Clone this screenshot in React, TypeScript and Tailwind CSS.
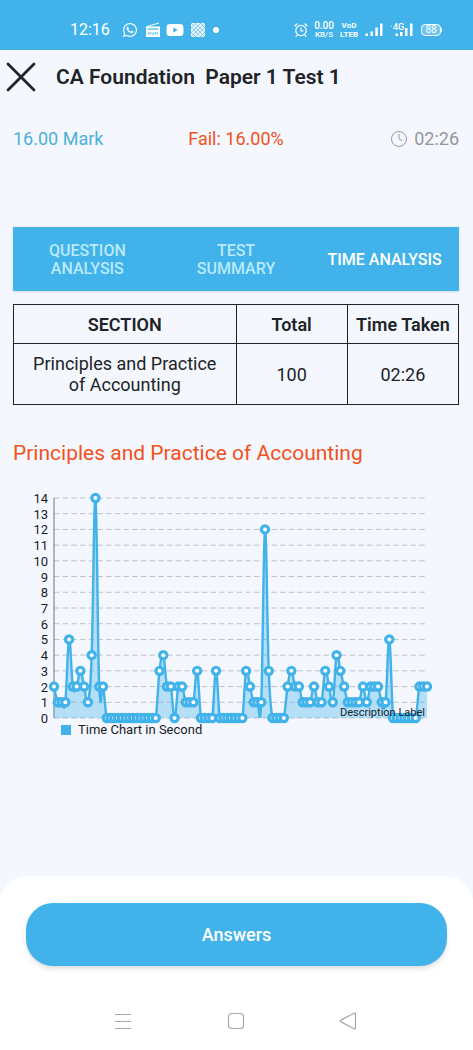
import { Clock } from "lucide-react";
import { FaWhatsapp, FaYoutube } from "react-icons/fa";

const tabs = ["QUESTION ANALYSIS", "TEST SUMMARY", "TIME ANALYSIS"];

// seconds spent on each of the 100 questions
const seconds = [
  2, 1, 1, 1, 5, 2, 2, 3, 2, 1, 4, 14, 2, 2, 0, 0, 0, 0, 0, 0,
  0, 0, 0, 0, 0, 0, 0, 0, 3, 4, 2, 2, 0, 2, 2, 1, 1, 1, 3, 0,
  0, 0, 0, 3, 0, 0, 0, 0, 0, 0, 0, 3, 2, 1, 1, 1, 12, 3, 0, 0,
  0, 0, 2, 3, 2, 2, 1, 1, 1, 2, 1, 1, 3, 2, 1, 4, 3, 2, 1, 1,
  1, 1, 2, 1, 2, 2, 2, 1, 1, 5, 0, 0, 0, 0, 0, 0, 0, 2, 2, 2,
];

const LEFT = 41;
const RIGHT = 414;
const TOP = 14;
const BOTTOM = 234;
const MAX = 14;

const px = (i: number) => LEFT + (i * (RIGHT - LEFT)) / (seconds.length - 1);
const py = (v: number) => BOTTOM - (v * (BOTTOM - TOP)) / MAX;

// smooth line through all the points
function linePath() {
  const at = (i: number) => {
    const n = Math.min(Math.max(i, 0), seconds.length - 1);
    return { x: px(n), y: py(seconds[n]) };
  };
  let d = `M${at(0).x} ${at(0).y}`;
  for (let i = 1; i < seconds.length; i++) {
    const before = at(i - 2);
    const prev = at(i - 1);
    const cur = at(i);
    const next = at(i + 1);
    d += `C${prev.x + (cur.x - before.x) * 0.2} ${prev.y + (cur.y - before.y) * 0.2}`;
    d += ` ${cur.x - (next.x - prev.x) * 0.2} ${cur.y - (next.y - prev.y) * 0.2}`;
    d += ` ${cur.x} ${cur.y}`;
  }
  return d;
}

function TimeChart() {
  const line = linePath();
  const levels = Array.from({ length: MAX + 1 }, (_, v) => v);
  return (
    <svg viewBox="0 0 446 244" className="block w-full" role="img" aria-label="Time Chart in Second">
      <defs>
        <clipPath id="plot">
          <rect x={LEFT} y={TOP - 1} width={RIGHT - LEFT} height={BOTTOM - TOP + 1} />
        </clipPath>
      </defs>
      {levels.map((v) => (
        <g key={v}>
          <line x1={LEFT} x2={RIGHT} y1={py(v)} y2={py(v)} stroke="#bfc1c7" strokeDasharray="5.3 3.4" />
          <text x={LEFT - 6} y={py(v) + 5} textAnchor="end" fontSize="13" fill="#1b1c1f">
            {v}
          </text>
        </g>
      ))}
      <line x1={LEFT} x2={LEFT} y1={TOP} y2={BOTTOM} stroke="#6f7378" />
      <g clipPath="url(#plot)">
        <path d={`${line}L${RIGHT} ${BOTTOM}L${LEFT} ${BOTTOM}Z`} fill="#42b3ea" fillOpacity="0.36" />
        <path d={line} fill="none" stroke="#42b3ea" strokeWidth="2.4" />
      </g>
      {seconds.map((v, i) => (
        <g key={i}>
          <circle cx={px(i)} cy={py(v)} r="5.2" fill="#42b3ea" />
          <circle cx={px(i)} cy={py(v)} r="2" fill="#fff" />
        </g>
      ))}
      <text x={RIGHT - 2} y={BOTTOM - 2} textAnchor="end" fontSize="11" fill="#10202c">
        Description Label
      </text>
    </svg>
  );
}

function CloseIcon() {
  return (
    <svg viewBox="0 0 30 30" className="size-[30px]" stroke="currentColor" strokeWidth="2.8" strokeLinecap="round">
      <path d="M2 2l26 26M28 2 2 28" />
    </svg>
  );
}

function RadioIcon() {
  return (
    <svg viewBox="0 0 16 16" className="size-4" fill="none" stroke="currentColor">
      <path d="M2 4.5 14 1" strokeWidth="1" />
      <path d="M1 4.5h14v10.5H1z" fill="currentColor" stroke="none" />
      <path d="M2.5 7h11" stroke="#42b3ea" strokeWidth="1.2" />
      <path d="M3.5 12.7v-2h2v2M7 10.2v2h2v-2M10.5 12.7v-2h2v2" stroke="#42b3ea" strokeWidth="0.7" />
    </svg>
  );
}

function PatternIcon() {
  return (
    <svg viewBox="0 0 16 16" className="size-4">
      <rect x="1" y="1" width="14" height="14" rx="1" fill="#fff" fillOpacity="0.9" />
      <path
        d="M1 6l5-5M1 11 11 1M1 15 15 1M5 15 15 5M10 15l5-5M10 1l5 5M5 1l10 10M1 1l14 14M1 5l10 10M1 10l5 5"
        stroke="#42b3ea"
        strokeWidth="0.6"
      />
    </svg>
  );
}

function AlarmIcon() {
  return (
    <svg viewBox="0 0 14 14" className="size-3.5" fill="none" stroke="currentColor" strokeWidth="1.2" strokeLinecap="round">
      <circle cx="7" cy="7.5" r="5.2" />
      <path d="M7 5v2.8h2M1 2.8 3 1M13 2.8 11 1M3 12.3l-1 1M11 12.3l1 1" />
    </svg>
  );
}

function SignalIcon() {
  return (
    <svg viewBox="0 0 18 14" className="h-3.5 w-[18px]" fill="currentColor">
      <rect x="0.5" y="10.5" width="2.5" height="2.5" />
      <rect x="5.5" y="8.5" width="2.5" height="4.5" />
      <rect x="10.3" y="4.5" width="2.5" height="8.5" />
      <rect x="15" y="0.5" width="2.5" height="12.5" />
    </svg>
  );
}

function Signal4gIcon() {
  return (
    <svg viewBox="0 0 22 14" className="h-3.5 w-[22px]" fill="currentColor">
      <text x="2" y="7" fontSize="9" fontWeight="500">4G</text>
      <circle cx="0.7" cy="3" r="0.6" />
      <rect x="4.5" y="10.5" width="2.5" height="2.5" />
      <rect x="9" y="9" width="2.5" height="4" />
      <rect x="14" y="5" width="2.5" height="8" />
      <rect x="19" y="0.5" width="2.5" height="12.5" />
    </svg>
  );
}

function StatusBar() {
  return (
    <div className="flex h-[50px] items-center justify-between bg-[#42b3ea] pt-2.5 pr-[31px] pl-[70px] text-white">
      <div className="flex items-center">
        <span className="mr-3 text-base leading-5">12:16</span>
        <FaWhatsapp className="mr-[7px] size-4" />
        <RadioIcon />
        <FaYoutube className="mr-[6px] ml-[5px] size-[18px]" />
        <PatternIcon />
        <span className="ml-[7px] size-1.5 rounded-full bg-white" />
      </div>
      <div className="flex items-center">
        <AlarmIcon />
        <span className="ml-1.5 flex flex-col items-center font-medium">
          <span className="text-[10px] leading-[10px]">0.00</span>
          <span className="text-[8px] leading-[8px]">KB/S</span>
        </span>
        <span className="mr-[7px] ml-1.5 flex flex-col items-center text-[8px] leading-[9px] font-bold">
          <span>VoD</span>
          <span>LTEB</span>
        </span>
        <SignalIcon />
        <span className="w-2" />
        <Signal4gIcon />
        <span className="ml-2 flex h-3 w-5 items-center justify-center rounded-[4px] border border-white bg-white/25 text-[10px] leading-none">
          88
        </span>
        <span className="h-1 w-px bg-white" />
      </div>
    </div>
  );
}

function NavBar() {
  return (
    <nav className="flex items-center justify-between pr-[116px] pl-[114px] text-[#a8a8a8]">
      <button aria-label="Recent apps">
        <svg viewBox="0 0 18 18" className="size-[18px]" stroke="currentColor" strokeWidth="1">
          <path d="M1 2.5h16M1 9.5h16M1 16.5h16" />
        </svg>
      </button>
      <button aria-label="Home">
        <svg viewBox="0 0 18 18" className="size-[18px]" fill="none" stroke="currentColor" strokeWidth="1.2">
          <rect x="1.5" y="1.5" width="15" height="15" rx="3" />
        </svg>
      </button>
      <button aria-label="Back">
        <svg viewBox="0 0 18 18" className="size-[18px]" fill="none" stroke="currentColor" strokeWidth="1.2" strokeLinejoin="round">
          <path d="M15 1.2 2 8.1q-1.4.9 0 1.8L15 16.8q1.4.5 1.5-.8V2q0-1.4-1.5-.8Z" />
        </svg>
      </button>
    </nav>
  );
}

export default function App() {
  return (
    <div className="flex min-h-screen flex-col bg-[#f4f7fe] font-['Roboto',sans-serif] text-[#212327]">
      <StatusBar />

      {/* Title */}
      <header className="flex h-[53px] items-center">
        <button aria-label="Close" className="ml-1.5">
          <CloseIcon />
        </button>
        <h1 className="ml-5 text-[21px] leading-7 font-semibold whitespace-pre">
          {"CA Foundation  Paper 1 Test 1"}
        </h1>
      </header>

      <main className="flex-1 pr-3.5 pl-[13px]">
        {/* Result */}
        <div className="mt-6 flex items-center justify-between text-lg leading-6">
          <span className="flex-1 text-[#4bb1da]">16.00 Mark</span>
          <span className="text-[#f1511b]">Fail: 16.00%</span>
          <span className="flex flex-1 items-center justify-end gap-1.5 text-[#95989d]">
            <Clock className="size-[18px]" strokeWidth={1.3} />
            02:26
          </span>
        </div>

        {/* Tabs */}
        <div role="tablist" className="mt-[76px] grid h-16 grid-cols-3 bg-[#42b3ea] shadow-sm">
          {tabs.map((tab, i) => (
            <button
              key={tab}
              role="tab"
              aria-selected={i === 2}
              className={`pt-0.5 text-base leading-[18px] font-medium ${
                i === 2 ? "px-4 whitespace-nowrap text-white" : "px-8 text-[#b9e9fc]"
              }`}
            >
              {tab}
            </button>
          ))}
        </div>

        {/* Section times */}
        <table className="mt-[13px] w-full table-fixed border-collapse text-center text-lg leading-[21px]">
          <thead>
            <tr className="h-[39px]">
              <th className="w-1/2 border border-[#212327] font-semibold">SECTION</th>
              <th className="w-1/4 border border-[#212327] font-semibold">Total</th>
              <th className="w-1/4 border border-[#212327] font-semibold whitespace-nowrap">Time Taken</th>
            </tr>
          </thead>
          <tbody>
            <tr className="h-[61px]">
              <td className="border border-[#212327] px-4">Principles and Practice of Accounting</td>
              <td className="border border-[#212327]">100</td>
              <td className="border border-[#212327]">02:26</td>
            </tr>
          </tbody>
        </table>

        <h2 className="mt-[34px] text-[21px] leading-7 text-[#f1511b]">Principles and Practice of Accounting</h2>

        <div className="mt-[17px]">
          <TimeChart />
          <div className="-mt-1 ml-12 flex items-center gap-[7px] text-[13px] leading-3 text-[#1b1c1f]">
            <span className="size-2.5 bg-[#42b3ea]" />
            Time Chart in Second
          </div>
        </div>
      </main>

      {/* Footer */}
      <footer className="rounded-t-[27px] bg-white px-[26px] pt-[27px] pb-5">
        <button className="h-[63px] w-full rounded-[27px] bg-[#42b3ea] text-lg font-medium text-white shadow-md">
          Answers
        </button>
        <div className="-mx-[26px] mt-[46px]">
          <NavBar />
        </div>
      </footer>
    </div>
  );
}
